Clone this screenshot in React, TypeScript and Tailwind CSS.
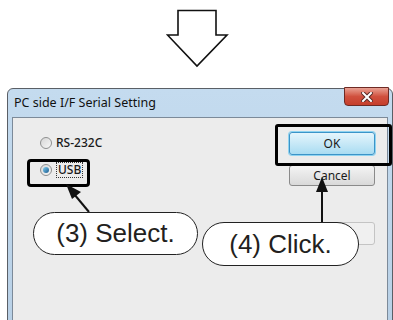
import React from "react";

function Radio({ checked }: { checked?: boolean }) {
  return (
    <span className="relative inline-flex h-[12px] w-[12px] items-center justify-center rounded-full border border-[#8e8f8f] bg-gradient-to-br from-[#d6d6d6] to-[#f7f7f7]">
      {checked && (
        <span className="h-[6px] w-[6px] rounded-full bg-gradient-to-br from-[#7fd0f2] to-[#1b5b8e]" />
      )}
    </span>
  );
}

export default function App() {
  return (
    <div
      className="relative h-[320px] w-[393px] overflow-hidden bg-white"
      style={{ fontFamily: '"Noto Sans", "DejaVu Sans", sans-serif' }}
    >
      {/* Top arrow */}
      <div className="flex h-[88px] justify-center">
        <svg width="64" height="60" viewBox="0 0 64 60" className="ml-[3px] mt-[9px]">
          <path
            d="M12 1.5 H50 V26 H61 L31 57 L1.5 26 H12 Z"
            fill="white"
            stroke="#111"
            strokeWidth="1.6"
            strokeLinejoin="miter"
          />
        </svg>
      </div>

      {/* Dialog window */}
      <div className="ml-[7px] h-[240px] w-[386px] rounded-t-[6px] border border-[#5a5f66] bg-gradient-to-b from-[#c4dbef] to-[#b8d0e6] px-[4px]">
        <div className="flex h-[28px] items-center justify-between">
          <span className="ml-[2px] mt-[1px] text-[12.5px] text-[#111]">PC side I/F Serial Setting</span>
          <div className="mr-[-1px] mt-[-2px] flex h-[19px] w-[45px] items-center justify-center self-start rounded-b-[4px] border border-[#6e2a24] bg-gradient-to-b from-[#e8a093] via-[#d0503e] to-[#c53e2b]">
            <svg width="12" height="10" viewBox="0 0 12 10">
              <path d="M2 1 L10 9 M10 1 L2 9" stroke="#5a2a25" strokeWidth="4" strokeLinecap="square" />
              <path d="M2 1 L10 9 M10 1 L2 9" stroke="#ffffff" strokeWidth="2" strokeLinecap="square" />
            </svg>
          </div>
        </div>
        <div className="flex h-[210px] border border-[#7c8a99] bg-[#ececec]">
          <div className="ml-[27px] mt-[16px] flex flex-col gap-[9px] text-[12px] font-medium text-[#1a1a1a]">
            <div className="flex h-[18px] items-center gap-[4px]">
              <Radio />
              <span>RS-232C</span>
            </div>
            <div className="flex h-[18px] items-center gap-[4px]">
              <Radio checked />
              <span className="border border-dotted border-[#333] px-[1px] leading-[14px]">USB</span>
            </div>
          </div>
          <div className="ml-auto mr-[12px] mt-[14px] flex w-[86px] flex-col gap-[11px] text-[12px] text-[#1a1a1a]">
            <div className="flex h-[23px] items-center justify-center rounded-[3px] border border-[#3c94c8] bg-gradient-to-b from-[#e5f5fc] to-[#a9dcf2] shadow-[0_0_0_1px_#8fd3f0]">
              OK
            </div>
            <div className="-mt-[1px] flex h-[21px] items-center justify-center rounded-[3px] border border-[#8a8a8a] bg-gradient-to-b from-[#f4f4f4] to-[#d9d9d9]">
              Cancel
            </div>
            <div className="mt-[25px] flex h-[23px] items-center justify-center rounded-[3px] border border-[#c4c4c4] bg-[#f0f0f0]" />
          </div>
        </div>
      </div>

      {/* Highlight boxes */}
      <div className="absolute left-[27px] top-[159px] h-[28px] w-[63px] rounded-[4px] border-[3px] border-black" />
      <div className="absolute left-[275px] top-[124px] h-[42px] w-[117px] rounded-[3px] border-[3px] border-black" />

      {/* Arrows */}
      <svg className="absolute left-0 top-0" width="393" height="320" viewBox="0 0 393 320">
        <line x1="89" y1="212" x2="74" y2="194" stroke="#111" strokeWidth="2" />
        <path d="M66 184 L81 192 L72 199 Z" fill="#111" />
        <line x1="322" y1="223" x2="322" y2="190" stroke="#111" strokeWidth="2" />
        <path d="M322 177 L328 192 L316 192 Z" fill="#111" />
      </svg>

      {/* Bubbles */}
      <div
        className="absolute left-[33px] top-[212px] flex h-[43px] w-[165px] items-center justify-center rounded-full border-[1.5px] border-[#222] bg-white text-[26px] text-[#231f20]"
        style={{ fontFamily: '"Liberation Sans", Arial, sans-serif' }}
      >
        (3) Select.
      </div>
      <div
        className="absolute left-[202px] top-[222px] flex h-[44px] w-[157px] items-center justify-center rounded-full border-[1.5px] border-[#222] bg-white text-[26px] text-[#231f20]"
        style={{ fontFamily: '"Liberation Sans", Arial, sans-serif' }}
      >
        (4) Click.
      </div>
    </div>
  );
}
